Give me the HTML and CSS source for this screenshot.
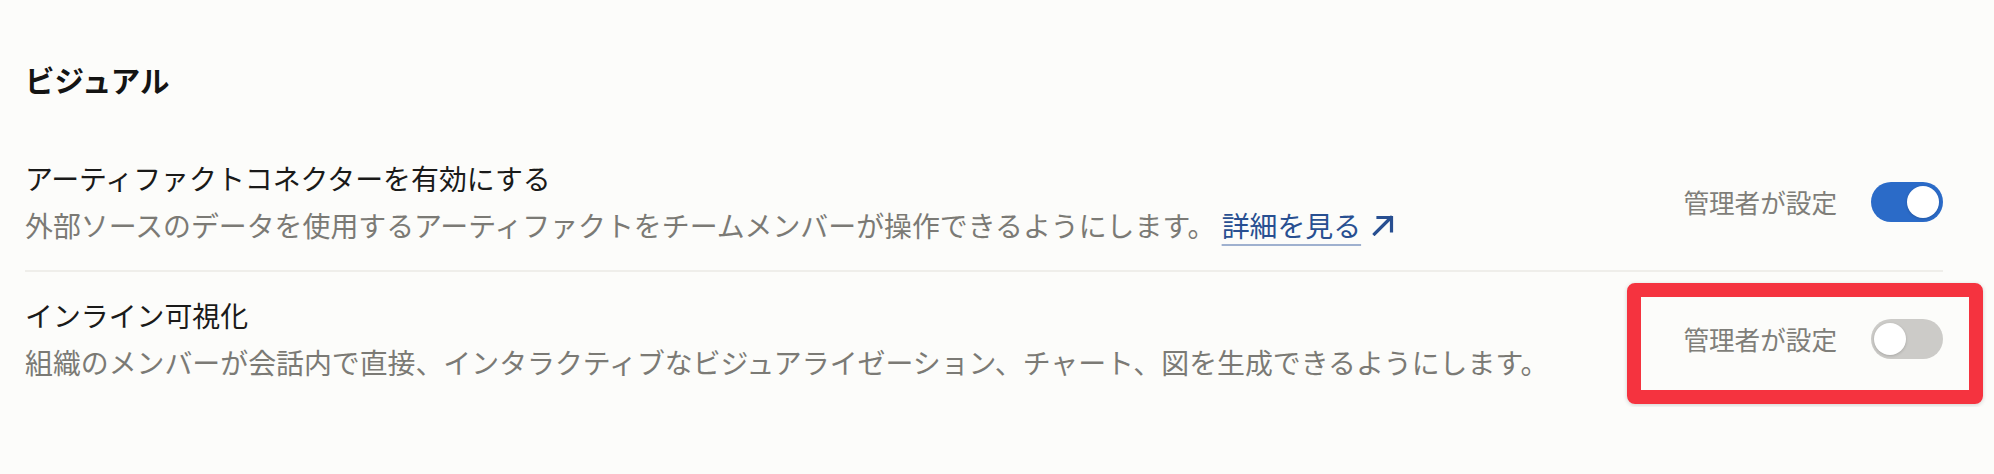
FILE: index.html
```html
<!DOCTYPE html>
<html lang="ja">
<head>
<meta charset="utf-8">
<title>ビジュアル</title>
<link rel="stylesheet" href="styles.css">
</head>
<body>
<main class="page">
  <h2 class="section-title">ビジュアル</h2>
  <div class="setting-list">
    <div class="setting-row">
      <div class="setting-text">
        <div class="setting-name">アーティファクトコネクターを有効にする</div>
        <div class="setting-desc">外部ソースのデータを使用するアーティファクトをチームメンバーが操作できるようにします。 <a class="more-link" href="#"><span class="more-text">詳細を見る</span><svg class="more-icon" viewBox="0 0 24 22" width="24" height="22" aria-hidden="true"><path d="M3.5 20 L20 3.5 M7 3.5 H20.5 V17" fill="none" stroke="currentColor" stroke-width="3.2" stroke-linecap="square"/></svg></a></div>
      </div>
      <div class="setting-control">
        <span class="managed">管理者が設定</span>
        <span class="toggle toggle-on"><span class="knob"></span></span>
      </div>
    </div>
    <div class="setting-row">
      <div class="setting-text">
        <div class="setting-name">インライン可視化</div>
        <div class="setting-desc">組織のメンバーが会話内で直接、インタラクティブなビジュアライゼーション、チャート、図を生成できるようにします。</div>
      </div>
      <div class="setting-control">
        <span class="managed">管理者が設定</span>
        <span class="toggle toggle-off"><span class="knob"></span></span>
      </div>
    </div>
  </div>
  <div class="highlight"></div>
</main>
</body>
</html>
```

FILE: styles.css
```css
html, body {
  margin: 0;
  padding: 0;
  background: #fcfcfa;
}

body {
  font-family: "Noto Sans CJK JP", "Noto Sans", sans-serif;
  color: #1a1a19;
}

.page {
  position: relative;
  width: 1918px;
  padding: 59px 51px 0 25px;
  box-sizing: content-box;
}

.section-title {
  margin: 0;
  font-size: 29.5px;
  font-weight: 700;
  line-height: 40px;
  color: #141413;
}

.setting-list {
  margin-top: 34px;
  display: flex;
  flex-direction: column;
}

.setting-row {
  display: flex;
  align-items: center;
  justify-content: space-between;
  padding: 24px 0 24px;
}

.setting-row + .setting-row {
  border-top: 2px solid #efeeea;
  padding-top: 22px;
}

.setting-text {
  display: flex;
  flex-direction: column;
  gap: 5px;
}

.setting-name {
  font-size: 27.9px;
  line-height: 42px;
  color: #1a1a19;
}

.setting-desc {
  font-size: 27.9px;
  line-height: 42px;
  color: #7b7a75;
}

.more-link {
  color: #284f91;
  text-decoration: none;
  display: inline-flex;
  align-items: center;
}

.more-text {
  text-decoration: underline;
  text-decoration-color: #9fb1cf;
  text-decoration-thickness: 2px;
  text-underline-offset: 7px;
}

.more-icon {
  margin-left: 10px;
}

.setting-control {
  display: flex;
  align-items: center;
  gap: 34px;
}

.managed {
  font-size: 25.6px;
  line-height: 40px;
  color: #7f7e79;
}

.toggle {
  position: relative;
  width: 72px;
  height: 40px;
  border-radius: 20px;
  display: block;
  flex: none;
}

.toggle-on {
  background: #2b6bc8;
}

.toggle-off {
  background: #cccbc8;
}

.knob {
  position: absolute;
  top: 4px;
  width: 32px;
  height: 32px;
  border-radius: 50%;
  background: #ffffff;
  box-shadow: 0 1px 3px rgba(0, 0, 0, 0.18);
}

.toggle-on .knob {
  right: 4px;
}

.toggle-off .knob {
  left: 3px;
}

.highlight {
  position: absolute;
  left: 1627px;
  top: 283px;
  width: 356px;
  height: 121px;
  box-sizing: border-box;
  border: 14px solid #f5333f;
  border-radius: 8px;
  box-shadow: 0 1px 4px rgba(0, 0, 0, 0.18);
  pointer-events: none;
}
```
